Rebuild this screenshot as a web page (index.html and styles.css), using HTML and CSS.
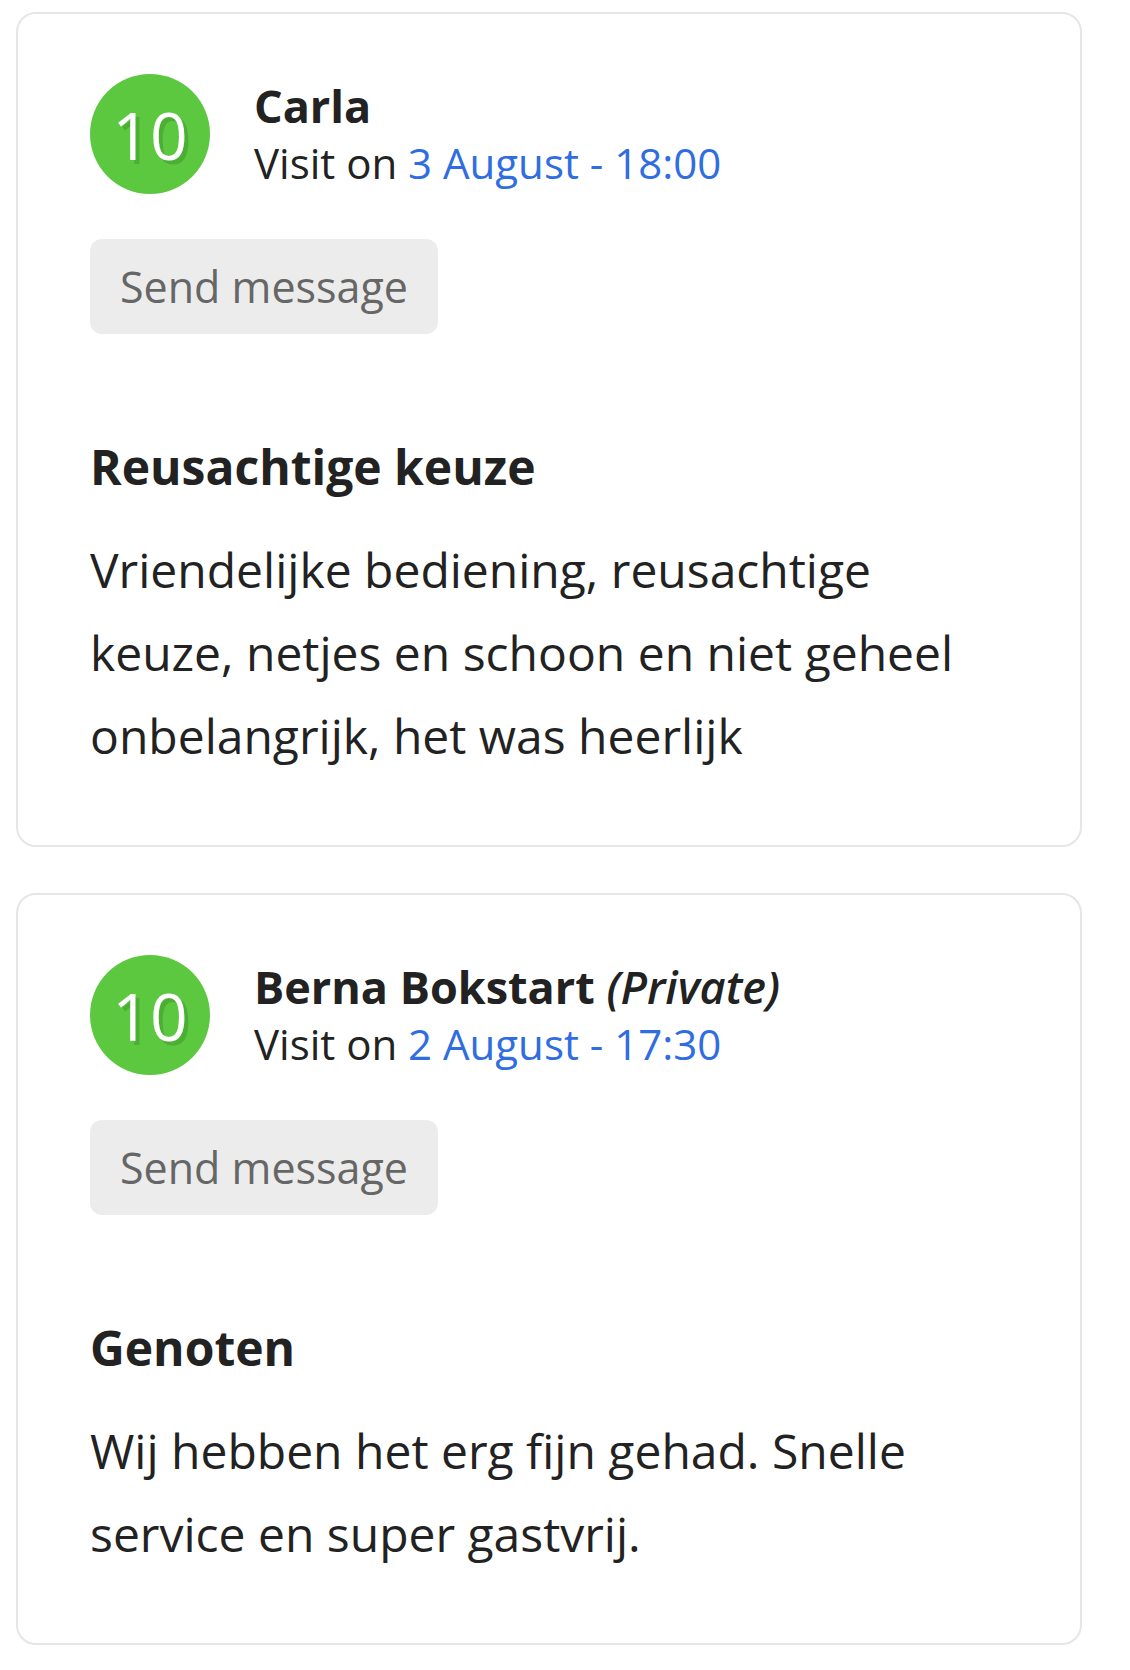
FILE: index.html
```html
<!DOCTYPE html>
<html lang="nl">
<head>
  <meta charset="UTF-8">
  <meta name="viewport" content="width=device-width, initial-scale=1.0">
  <title>Reviews</title>
  <link rel="stylesheet" href="styles.css">
</head>
<body>
  <div class="review-list">
    <div class="review-card">
      <div class="review-head">
        <div class="score">10</div>
        <div class="review-meta">
          <div class="guest-name">Carla</div>
          <div class="visit">Visit on <span class="visit-date">3 August - 18:00</span></div>
        </div>
      </div>
      <button class="msg-btn">Send message</button>
      <h3 class="review-title">Reusachtige keuze</h3>
      <p class="review-text">Vriendelijke bediening, reusachtige keuze, netjes en schoon en niet geheel onbelangrijk, het was heerlijk</p>
    </div>

    <div class="review-card">
      <div class="review-head">
        <div class="score">10</div>
        <div class="review-meta">
          <div class="guest-name">Berna Bokstart <em class="private">(Private)</em></div>
          <div class="visit">Visit on <span class="visit-date">2 August - 17:30</span></div>
        </div>
      </div>
      <button class="msg-btn">Send message</button>
      <h3 class="review-title">Genoten</h3>
      <p class="review-text">Wij hebben het erg fijn gehad. Snelle service en super gastvrij.</p>
    </div>
  </div>
</body>
</html>
```

FILE: styles.css
```css
* {
  box-sizing: border-box;
}

body {
  margin: 0;
  background: #fff;
  color: #222;
  font-family: 'Open Sans', 'Noto Sans', 'Liberation Sans', sans-serif;
}

.review-list {
  padding: 12px 48px 0 16px;
}

.review-card {
  border: 2px solid #e6e6e6;
  border-radius: 20px;
  padding: 60px 72px 68px 72px;
  margin-bottom: 46px;
  background: #fff;
}

.review-head {
  display: flex;
  align-items: center;
  gap: 44px;
}

.score {
  flex: 0 0 120px;
  width: 120px;
  height: 120px;
  border-radius: 50%;
  background: #5cc840;
  color: #fff;
  font-size: 66px;
  line-height: 120px;
  text-align: center;
  text-shadow: 4px 4px 0 #4caf33;
}

.guest-name {
  font-size: 45px;
  font-weight: 700;
  line-height: 57px;
}

.private {
  font-weight: 600;
  font-style: italic;
}

.visit {
  font-size: 42px;
  line-height: 57px;
}

.visit-date {
  color: #2f6de1;
}

.msg-btn {
  display: inline-block;
  margin-top: 45px;
  padding: 19px 30px;
  border: none;
  border-radius: 12px;
  background: #ececec;
  color: #666;
  font-family: inherit;
  font-size: 43px;
  line-height: 57px;
  cursor: pointer;
}

.review-title {
  margin: 102px 0 0 0;
  font-size: 48px;
  font-weight: 700;
  line-height: 62px;
}

.review-text {
  margin: 30px 0 0 0;
  font-size: 48px;
  line-height: 83px;
}
```
